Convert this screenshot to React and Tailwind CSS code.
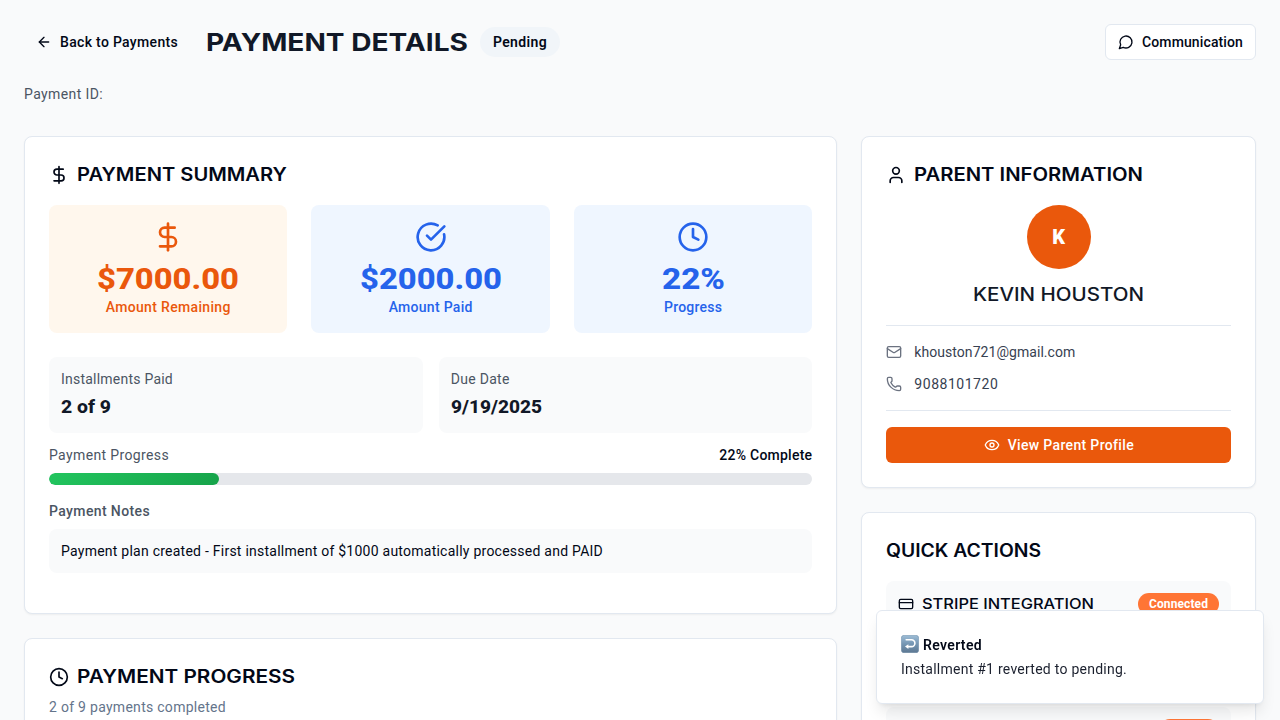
import { useLayoutEffect, useRef } from "react";
import { ArrowLeft, DollarSign, CircleCheckBig, Clock, User, Mail, Phone, Eye, CreditCard } from "lucide-react";

// Text set to an exact measure: headings stretch, body text is tracked.
function Fit({ w, stretch = false, className = "", children }) {
  const ref = useRef(null);
  useLayoutEffect(() => {
    const el = ref.current;
    el.style.letterSpacing = "";
    el.style.transform = "";
    const natural = el.getBoundingClientRect().width;
    if (stretch) el.style.transform = `scaleX(${w / natural})`;
    else el.style.letterSpacing = `${(w - natural) / el.textContent.length}px`;
  }, [w, stretch]);
  return (
    <span className={`inline-block shrink-0 text-left whitespace-nowrap ${className}`} style={{ width: w }}>
      <span ref={ref} className="inline-block origin-left">{children}</span>
    </span>
  );
}

const head = "font-['Inter',sans-serif]";

function Card({ className = "", children }) {
  return <section className={`rounded-lg border border-[#e2e8f0] bg-white p-6 shadow-xs ${className}`}>{children}</section>;
}

function CardTitle({ icon: Icon, w, children }) {
  return (
    <h2 className="flex h-7 items-center gap-2 text-[#020817]">
      {Icon && <Icon className="size-5" />}
      <Fit w={w} stretch className={`${head} text-[18px] leading-7 font-semibold`}>{children}</Fit>
    </h2>
  );
}

function Stat({ icon: Icon, value, vw, label, lw, className }) {
  return (
    <div className={`flex flex-col items-center rounded-lg p-4 ${className}`}>
      <Icon className="mb-2 size-8" />
      <Fit w={vw} stretch className="text-[30px] leading-9 font-extrabold">{value}</Fit>
      <Fit w={lw} className="text-sm font-medium">{label}</Fit>
    </div>
  );
}

function Info({ label, lw, value, vw }) {
  return (
    <div className="flex flex-col gap-1 rounded-lg bg-[#f9fafb] p-3">
      <Fit w={lw} className="text-sm text-[#4b5563]">{label}</Fit>
      <Fit w={vw} stretch className="text-lg leading-7 font-extrabold text-[#111827]">{value}</Fit>
    </div>
  );
}

function ChatIcon() {
  return (
    <svg viewBox="0 0 24 24" className="size-4" fill="none" stroke="currentColor" strokeWidth="2" strokeLinecap="round" strokeLinejoin="round">
      <path d="M7.9 20A9 9 0 1 0 4 16.1L2 22Z" />
    </svg>
  );
}

function RevertIcon() {
  return (
    <svg viewBox="0 0 18 18" className="size-[18px] shrink-0">
      <defs>
        <linearGradient id="tile" x1="0" y1="0" x2="0" y2="1">
          <stop offset="0" stopColor="#9dbdd6" />
          <stop offset="0.5" stopColor="#7596b3" />
          <stop offset="1" stopColor="#5d7892" />
        </linearGradient>
      </defs>
      <rect x="0.3" y="0.3" width="17.4" height="17.4" rx="2.8" fill="url(#tile)" stroke="#6d8ba6" strokeWidth="0.5" />
      <path d="M5.2 4.8h5.3a3.4 3.4 0 0 1 0 6.8H7" fill="none" stroke="#fff" strokeWidth="1.6" strokeLinecap="round" />
      <path d="M4 11.6 7.4 9.2v4.8z" fill="#fff" />
    </svg>
  );
}

export default function App() {
  return (
    <div className="h-screen overflow-hidden bg-[#f9fafb] p-6 font-['Roboto',sans-serif] text-[#020817]">
      <header className="flex h-9 items-center justify-between">
        <div className="flex items-center">
          <button className="flex h-9 items-center gap-2 px-3 text-sm font-medium">
            <ArrowLeft className="size-4" />
            <Fit w={118}>Back to Payments</Fit>
          </button>
          <h1 className="ml-4 flex text-[#111827]">
            <Fit w={262} stretch className={`${head} text-[24.5px] leading-9 font-bold`}>PAYMENT DETAILS</Fit>
          </h1>
          <span className="ml-3 flex h-[30px] w-20 items-center justify-center rounded-full bg-[#f1f5f9] text-sm font-semibold">
            <Fit w={54}>Pending</Fit>
          </span>
        </div>
        <button className="flex h-9 items-center gap-2 rounded-md border border-[#e2e8f0] bg-white px-3 text-sm font-medium">
          <ChatIcon />
          <Fit w={101}>Communication</Fit>
        </button>
      </header>

      <p className="mt-6 mb-8 flex h-5 text-sm text-[#4b5563]"><Fit w={79}>Payment ID:</Fit></p>

      <main className="grid grid-cols-3 items-start gap-6">
        <div className="col-span-2 flex flex-col gap-6">
          <Card className="h-[478px]">
            <CardTitle icon={DollarSign} w={210}>PAYMENT SUMMARY</CardTitle>
            <div className="mt-4 grid grid-cols-3 gap-6">
              <Stat icon={DollarSign} value="$7000.00" vw={142} label="Amount Remaining" lw={125} className="bg-[#fff7ed] text-[#ea580c]" />
              <Stat icon={CircleCheckBig} value="$2000.00" vw={142} label="Amount Paid" lw={84} className="bg-[#eff6ff] text-[#2563eb]" />
              <Stat icon={Clock} value="22%" vw={63} label="Progress" lw={58} className="bg-[#eff6ff] text-[#2563eb]" />
            </div>
            <div className="mt-6 grid grid-cols-2 gap-4">
              <Info label="Installments Paid" lw={112} value="2 of 9" vw={50} />
              <Info label="Due Date" lw={59} value="9/19/2025" vw={91} />
            </div>
            <div className="mt-3 flex h-5 justify-between text-sm">
              <Fit w={120} className="text-[#4b5563]">Payment Progress</Fit>
              <Fit w={93} className="font-medium">22% Complete</Fit>
            </div>
            <div className="mt-2 h-3 overflow-hidden rounded-full bg-[#e5e7eb]">
              <div className="h-full w-[22.25%] rounded-full bg-[linear-gradient(135deg,#22c55e,#16a34a)]" />
            </div>
            <div className="mt-4 flex h-5 text-sm font-medium text-[#4b5563]"><Fit w={101}>Payment Notes</Fit></div>
            <div className="mt-2 flex rounded-lg bg-[#f9fafb] p-3 text-sm">
              <Fit w={542}>Payment plan created - First installment of $1000 automatically processed and PAID</Fit>
            </div>
          </Card>
          <Card className="h-60">
            <CardTitle icon={Clock} w={218}>PAYMENT PROGRESS</CardTitle>
            <p className="mt-1.5 flex text-sm text-[#64748b]"><Fit w={177}>2 of 9 payments completed</Fit></p>
          </Card>
        </div>

        <div className="flex flex-col gap-6">
          <Card>
            <CardTitle icon={User} w={229}>PARENT INFORMATION</CardTitle>
            <div className="mt-4 flex flex-col items-center gap-3">
              <div className="flex size-16 items-center justify-center rounded-full bg-[#ea580c] text-xl font-black text-white">K</div>
              <h3 className="flex text-[#111827]">
                <Fit w={171} stretch className={`${head} text-[18px] leading-7 font-medium`}>KEVIN HOUSTON</Fit>
              </h3>
            </div>
            <div className="mt-4 h-px bg-[#e2e8f0]" />
            <div className="mt-4 flex flex-col gap-3 text-sm text-[#374151]">
              <div className="flex items-center gap-3"><Mail className="size-4 text-[#6b7280]" /><Fit w={161}>khouston721@gmail.com</Fit></div>
              <div className="flex items-center gap-3"><Phone className="size-4 text-[#6b7280]" /><Fit w={84}>9088101720</Fit></div>
            </div>
            <div className="mt-4 h-px bg-[#e2e8f0]" />
            <button className="mt-4 flex h-9 w-full items-center justify-center gap-2 rounded-md bg-[#ea580c] text-sm font-medium text-white">
              <Eye className="size-4" />
              <Fit w={126}>View Parent Profile</Fit>
            </button>
          </Card>
          <Card className="h-96">
            <CardTitle w={155}>QUICK ACTIONS</CardTitle>
            <div className="mt-4 flex h-[110px] items-start justify-between rounded-lg bg-[#f9fafb] p-3">
              <div className="flex h-[22px] items-center gap-2">
                <CreditCard className="size-4" />
                <Fit w={172} stretch className={`${head} text-[14.5px] leading-5 font-medium`}>STRIPE INTEGRATION</Fit>
              </div>
              <span className="flex h-[22px] w-[81px] items-center justify-center rounded-full bg-[#ff7535] text-xs font-bold text-white">
                <Fit w={59}>Connected</Fit>
              </span>
            </div>
            <div className="mt-4 flex h-[110px] items-start justify-end rounded-lg bg-[#f9fafb] p-3">
              <span className="h-[22px] w-[60px] rounded-full bg-[#ff7535]" />
            </div>
          </Card>
        </div>
      </main>

      <div className="fixed right-4 bottom-4 flex h-[94px] w-[388px] flex-col gap-1 rounded-md border border-[#e2e8f0] bg-white p-6 text-sm shadow-lg">
        <div className="flex h-5 items-center gap-1 font-semibold"><span className="-mt-0.5"><RevertIcon /></span><Fit w={59}>Reverted</Fit></div>
        <Fit w={226} className="text-[#1b202e]">Installment #1 reverted to pending.</Fit>
      </div>
    </div>
  );
}
